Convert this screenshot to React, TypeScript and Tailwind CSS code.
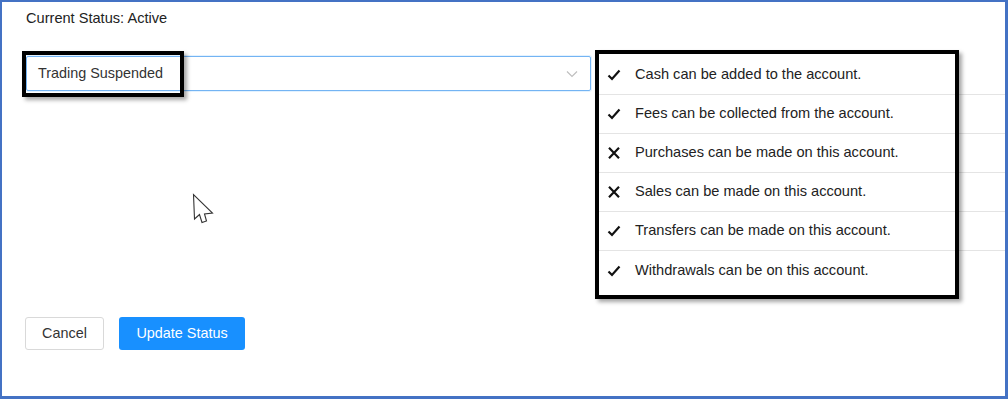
const rules = [
  { ok: true, text: "Cash can be added to the account." },
  { ok: true, text: "Fees can be collected from the account." },
  { ok: false, text: "Purchases can be made on this account." },
  { ok: false, text: "Sales can be made on this account." },
  { ok: true, text: "Transfers can be made on this account." },
  { ok: true, text: "Withdrawals can be on this account." },
];

function Check() {
  return (
    <svg width="14" height="12" viewBox="0 0 14 12" fill="none">
      <path d="M1.5 6.5 L5 10 L12.5 1.5" stroke="#111" strokeWidth="2.2" strokeLinejoin="miter" />
    </svg>
  );
}

function Cross() {
  return (
    <svg width="14" height="12" viewBox="0 0 14 12" fill="none">
      <path d="M2 0.8 L12 11.2 M12 0.8 L2 11.2" stroke="#111" strokeWidth="2.2" />
    </svg>
  );
}

export default function App() {
  return (
    <div className="relative w-[1008px] h-[399px] bg-white border-l-2 border-t-2 border-r-[3px] border-b-[3px] border-[#4472c4] font-['Liberation_Sans',Arial,sans-serif] text-[14.6px] text-[#222]">
      <div className="pl-6 pt-[6px] leading-5">Current Status: Active</div>

      <div className="flex mt-[28px] items-start">
        <div className="w-[565px] h-[35px] flex items-center justify-between border border-[#74b4f3] rounded-[2px] shadow-[0_0_0_1px_rgba(24,144,255,0.12)] ml-6 pl-[11px] pr-3">
          <span className="text-[#333] text-[14.4px]">Trading Suspended</span>
          <svg width="12" height="8" viewBox="0 0 12 8" fill="none">
            <path d="M1 1.5 L6 6.5 L11 1.5" stroke="#bfbfbf" strokeWidth="1.2" />
          </svg>
        </div>

        <ul className="ml-[7px] flex-1 flex flex-col">
          {rules.map((r, i) => (
            <li
              key={r.text}
              className={
                "h-[39px] flex items-center pl-[9px] gap-[14px] " +
                (i < rules.length - 1 ? "border-b border-[#e4e4e4]" : "")
              }
            >
              <span className="w-[14px] flex justify-center">{r.ok ? <Check /> : <Cross />}</span>
              <span className="text-[#222]">{r.text}</span>
            </li>
          ))}
        </ul>
      </div>

      <div className="flex gap-[15px] pl-[23px] mt-[27px] text-[14.4px]">
        <button className="w-[79px] h-[33px] border border-[#d9d9d9] rounded-[3px] bg-white text-[#333]">Cancel</button>
        <button className="w-[126px] h-[33px] rounded-[3px] bg-[#1890ff] text-white">Update Status</button>
      </div>

      {/* annotation boxes */}
      <div className="absolute left-[20px] top-[49px] w-[162px] h-[46px] border-4 border-black shadow-[3px_3px_4px_rgba(0,0,0,0.35)]" />
      <div className="absolute left-[593px] top-[48px] w-[364px] h-[249px] border-4 border-black shadow-[3px_3px_4px_rgba(0,0,0,0.35)]" />

      {/* mouse cursor */}
      <svg className="absolute left-[190px] top-[191px]" width="23" height="32" viewBox="0 0 23 32" fill="none">
        <path d="M1.5 1.5 L2.5 26 L7.5 21.5 L10 29.5 L14.5 28 L12.5 21 L20.5 20 Z" fill="white" stroke="#333" strokeWidth="1.1" strokeLinejoin="miter" />
      </svg>
    </div>
  );
}
